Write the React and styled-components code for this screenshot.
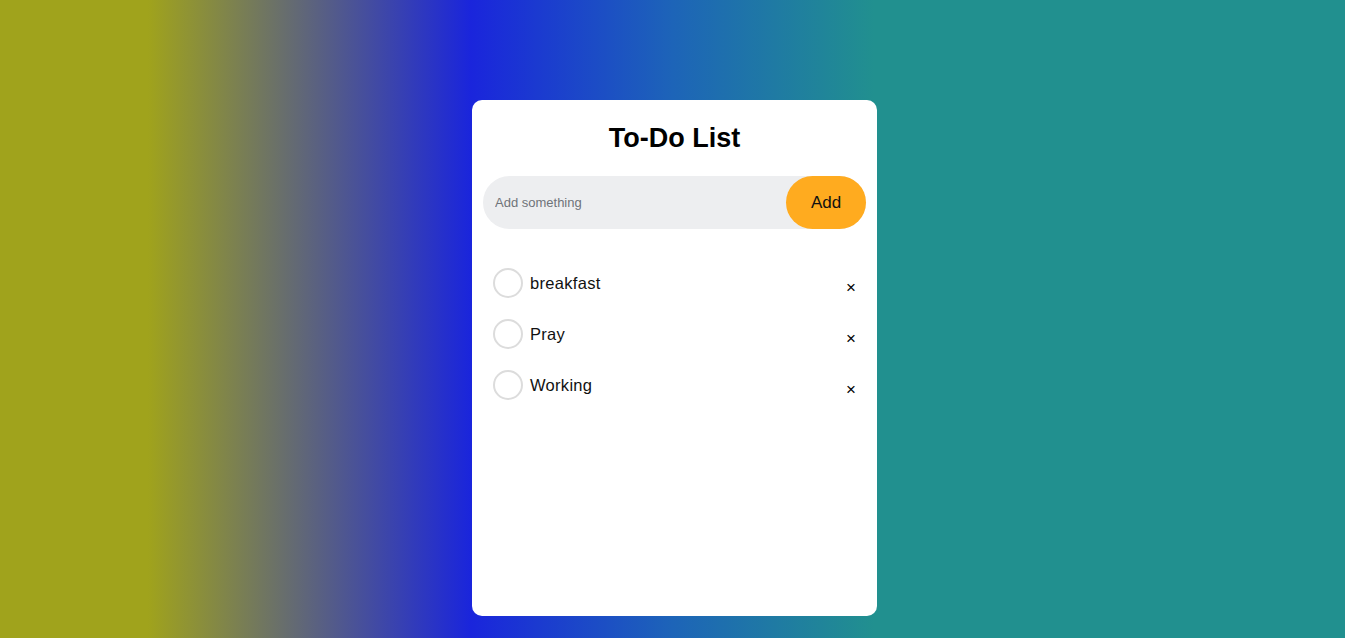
import React, { useState } from 'react';
import styled, { createGlobalStyle } from 'styled-components';

const GlobalStyle = createGlobalStyle`
  * {
    box-sizing: border-box;
  }
  body {
    margin: 0;
    font-family: "Liberation Sans", Arial, sans-serif;
  }
`;

const Page = styled.div`
  min-height: 100vh;
  padding: 100px 0 22px 4px;
  background: linear-gradient(
    to right,
    #a0a31c 0%,
    #a0a31c 11%,
    #1a25dc 35%,
    #1d64b8 50%,
    #21908f 65%,
    #21908f 100%
  );
`;

const Card = styled.div`
  width: 405px;
  min-height: 516px;
  margin: 0 auto;
  background: #fff;
  border-radius: 10px;
  padding: 20px 11px;
`;

const Title = styled.h2`
  margin: 0 0 20px;
  text-align: center;
  font-size: 27px;
  line-height: 36px;
  font-weight: 700;
  color: #000;
`;

const InputRow = styled.div`
  display: flex;
  align-items: center;
  height: 53px;
  background: #edeef0;
  border-radius: 30px;
  margin-bottom: 28px;
`;

const Field = styled.input`
  flex: 1;
  min-width: 0;
  border: none;
  outline: none;
  background: transparent;
  padding: 0 12px;
  font-family: inherit;
  font-size: 13px;
  color: #333;

  &::placeholder {
    color: #6f7379;
  }
`;

const AddButton = styled.button`
  width: 80px;
  height: 53px;
  border: none;
  border-radius: 30px;
  background: #ffab1f;
  font-family: inherit;
  font-size: 17px;
  color: #111;
  cursor: pointer;
`;

const List = styled.ul`
  list-style: none;
  margin: 0;
  padding: 0;
`;

const Item = styled.li`
  display: flex;
  align-items: center;
  height: 51px;
  padding: 0 4px 0 10px;
`;

const Check = styled.span`
  width: 30px;
  height: 30px;
  border-radius: 50%;
  border: 2px solid ${props => (props.$done ? '#ffab1f' : '#dcdcdc')};
  background: ${props => (props.$done ? '#ffab1f' : 'transparent')};
  margin-right: 7px;
  flex-shrink: 0;
  cursor: pointer;
`;

const Label = styled.span`
  flex: 1;
  font-size: 16.5px;
  color: #111;
  letter-spacing: 0.3px;
  padding-top: 1px;
  text-decoration: ${props => (props.$done ? 'line-through' : 'none')};
`;

const Remove = styled.span`
  width: 22px;
  text-align: center;
  font-size: 17px;
  color: #000;
  padding-top: 10px;
  cursor: pointer;
`;

const App = () => {
  const [items, setItems] = useState([
    { text: 'breakfast', done: false },
    { text: 'Pray', done: false },
    { text: 'Working', done: false },
  ]);
  const [value, setValue] = useState('');

  const add = () => {
    if (!value.trim()) return;
    setItems([...items, { text: value.trim(), done: false }]);
    setValue('');
  };

  return (
    <>
      <GlobalStyle />
      <Page>
        <Card>
          <Title>To-Do List</Title>
          <InputRow>
            <Field
              placeholder="Add something"
              value={value}
              onChange={e => setValue(e.target.value)}
            />
            <AddButton onClick={add}>Add</AddButton>
          </InputRow>
          <List>
            {items.map((item, i) => (
              <Item key={i}>
                <Check
                  $done={item.done}
                  onClick={() =>
                    setItems(items.map((it, j) => (j === i ? { ...it, done: !it.done } : it)))
                  }
                />
                <Label $done={item.done}>{item.text}</Label>
                <Remove onClick={() => setItems(items.filter((_, j) => j !== i))}>×</Remove>
              </Item>
            ))}
          </List>
        </Card>
      </Page>
    </>
  );
};

export default App;
